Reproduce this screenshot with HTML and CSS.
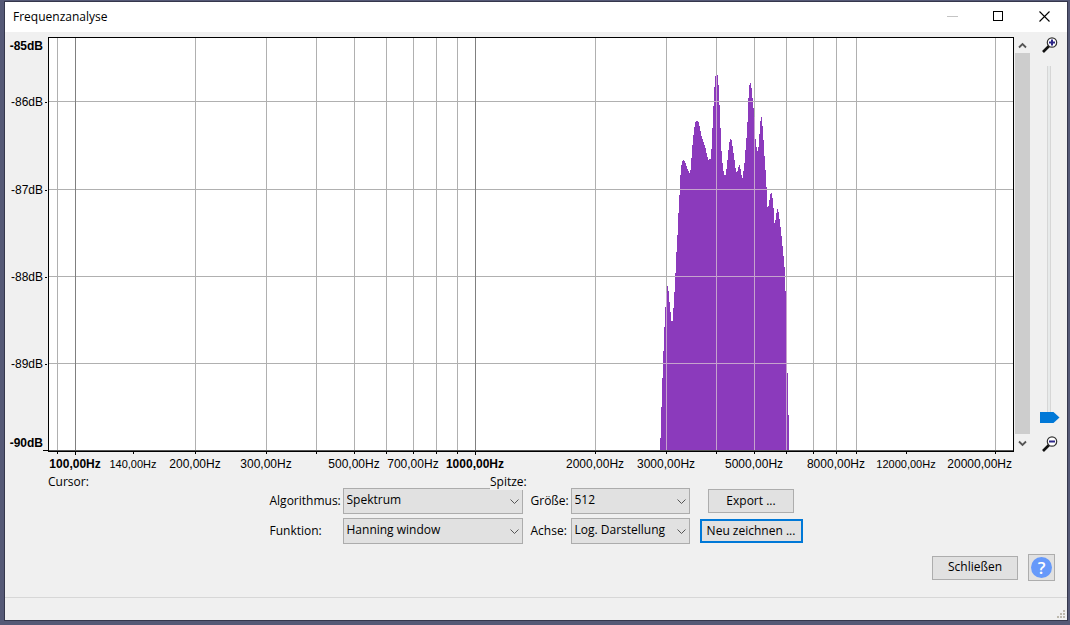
FILE: index.html
```html
<!DOCTYPE html>
<html lang="de">
<head>
<meta charset="utf-8">
<title>Frequenzanalyse</title>
<link rel="stylesheet" href="styles.css">
</head>
<body>
<main class="window">
  <header class="titlebar">
    <h1 class="title">Frequenzanalyse</h1>
    <button class="caption" aria-label="Minimieren" disabled><svg width="11" height="11"><path d="M0 5.5H11" stroke="#c4c4c4"/></svg></button>
    <button class="caption" aria-label="Maximieren"><svg width="11" height="11"><rect x=".5" y=".5" width="9" height="9" fill="none" stroke="#000"/></svg></button>
    <button class="caption" aria-label="Fenster schließen"><svg width="11" height="11"><path d="M.5 .5l10 10M10.5 .5l-10 10" stroke="#000" stroke-width="1.1"/></svg></button>
  </header>

  <section class="analysis">
    <div class="y-axis">
      <span class="y-label major" style="top:2.2%">-85dB</span>
      <span class="y-label tick" style="top:15.6%">-86dB</span>
      <span class="y-label tick" style="top:36.75%">-87dB</span>
      <span class="y-label tick" style="top:57.8%">-88dB</span>
      <span class="y-label tick" style="top:78.7%">-89dB</span>
      <span class="y-label major" style="top:97.8%">-90dB</span>
      <span class="y-end"></span>
    </div>
    <svg class="plot" viewBox="49 38 964 413" preserveAspectRatio="none" role="img" aria-label="Spektrum">
      <defs>
        <path id="spectrum" d="M660 450V438h1V407h1V378h1V351h1V327h1V307h1V293h1V286h1V291h1V302h1V312h1V321h1V321h1V308h1V292h1V273h1V252h1V235h1V213h1V195h1V175h1V165h1V161h1V160h1V161h1V163h1V166h1V169h1V171h1V173h1V170h1V158h1V145h1V135h1V127h1V122h1V121h1V121h1V122h1V126h1V131h1V136h1V139h1V142h1V145h1V148h1V153h1V157h1V160h1V159h2V149h1V128h1V106h1V87h1V76h1V75h1V75h1V85h1V105h1V128h1V151h1V163h1V171h1V175h1V175h1V169h1V160h1V150h1V142h1V139h1V140h1V146h1V153h1V160h1V168h1V172h1V171h1V167h1V165h1V169h1V175h1V178h1V171h1V163h1V150h1V138h1V122h1V98h1V85h1V83h1V88h1V98h1V108h1V117h1V139h1V147h1V151h1V147h1V134h1V121h1V117h1V126h1V140h1V156h1V170h1V187h1V207h1V206h1V200h1V194h1V193h1V198h1V208h1V223h1V220h1V213h1V209h1V212h1V219h1V227h1V236h1V246h1V256h1V267h1V291h2V373h1V415h1V450Z"/>
        <clipPath id="filled"><use href="#spectrum"/></clipPath>
        <path id="grid" d="M57.5 38V450M195.5 38V450M266.5 38V450M316.5 38V450M354.5 38V450M386.5 38V450M413.5 38V450M436.5 38V450M457.5 38V450M595.5 38V450M666.5 38V450M716.5 38V450M754.5 38V450M786.5 38V450M813.5 38V450M836.5 38V450M856.5 38V450M995.5 38V450M49 101.5H1013M49 189.5H1013M49 276.5H1013M49 363.5H1013"/>
      </defs>
      <use href="#grid" class="grid"/>
      <path class="decade" d="M75.5 38V450M475.5 38V450"/>
      <use href="#spectrum" class="spectrum"/>
      <use href="#grid" class="grid-over" clip-path="url(#filled)"/>
      <path class="base" d="M49 450.5H1013"/>
    </svg>
    <div class="scrollbar">
      <button class="arrow" aria-label="Nach oben"><svg width="9" height="7"><path d="M1 5.5L4.5 2L8 5.5" fill="none" stroke="#555" stroke-width="1.8"/></svg></button>
      <div class="scroll-thumb"></div>
      <button class="arrow" aria-label="Nach unten"><svg width="9" height="7"><path d="M1 1.5L4.5 5L8 1.5" fill="none" stroke="#555" stroke-width="1.8"/></svg></button>
    </div>
    <div class="zoom">
      <svg width="16" height="16"><path d="M1 15L7 9" stroke="#111" stroke-width="2.6"/><circle cx="10" cy="5.5" r="4.7" fill="#fff" stroke="#333" stroke-width="1.2"/><path d="M7 5.5h6M10 2.5v6" stroke="#2c2688" stroke-width="2"/></svg>
      <input class="zoom-range" type="range" min="0" max="100" value="0" aria-label="Zoom">
      <svg width="16" height="16"><path d="M1 15L7 9" stroke="#111" stroke-width="2.6"/><circle cx="10" cy="5.5" r="4.7" fill="#fff" stroke="#333" stroke-width="1.2"/><path d="M7 5.5h6" stroke="#2c2688" stroke-width="2"/></svg>
    </div>
    <div class="x-axis">
      <span class="mark" style="left:.95%"></span>
      <span class="mark long" style="left:2.8%"></span><span class="x-label major" style="left:2.8%">100,00Hz</span>
      <span class="mark" style="left:8.8%"></span><span class="x-label small" style="left:8.8%">140,00Hz</span>
      <span class="mark" style="left:15.22%"></span><span class="x-label" style="left:15.22%">200,00Hz</span>
      <span class="mark" style="left:22.57%"></span><span class="x-label" style="left:22.57%">300,00Hz</span>
      <span class="mark" style="left:27.74%"></span>
      <span class="mark" style="left:31.68%"></span><span class="x-label" style="left:31.68%">500,00Hz</span>
      <span class="mark" style="left:34.99%"></span>
      <span class="mark" style="left:37.78%"></span><span class="x-label" style="left:37.78%">700,00Hz</span>
      <span class="mark" style="left:40.17%"></span>
      <span class="mark" style="left:42.34%"></span>
      <span class="mark long" style="left:44.2%"></span><span class="x-label major" style="left:44.2%">1000,00Hz</span>
      <span class="mark" style="left:56.63%"></span><span class="x-label" style="left:56.63%">2000,00Hz</span>
      <span class="mark" style="left:63.98%"></span><span class="x-label" style="left:63.98%">3000,00Hz</span>
      <span class="mark" style="left:69.15%"></span>
      <span class="mark" style="left:73.09%"></span><span class="x-label" style="left:73.09%">5000,00Hz</span>
      <span class="mark" style="left:76.4%"></span>
      <span class="mark" style="left:79.19%"></span>
      <span class="mark" style="left:81.57%"></span><span class="x-label" style="left:81.57%">8000,00Hz</span>
      <span class="mark" style="left:83.64%"></span>
      <span class="mark" style="left:88.82%"></span><span class="x-label small" style="left:88.82%">12000,00Hz</span>
      <span class="mark" style="left:98.03%"></span><span class="x-label last">20000,00Hz</span>
    </div>
  </section>

  <div class="readout"><span class="cursor">Cursor:</span><span class="peak">Spitze:</span></div>

  <form class="options">
    <label for="algorithm">Algorithmus:</label>
    <div class="choice"><select id="algorithm"><option>Spektrum</option></select><svg width="9" height="6"><path d="M.5 .5l4 4 4-4" fill="none" stroke="#555"/></svg></div>
    <label class="second" for="size">Größe:</label>
    <div class="choice"><select id="size"><option>512</option></select><svg width="9" height="6"><path d="M.5 .5l4 4 4-4" fill="none" stroke="#555"/></svg></div>
    <button class="button" type="button">Export ...</button>
    <label for="function">Funktion:</label>
    <div class="choice"><select id="function"><option>Hanning window</option></select><svg width="9" height="6"><path d="M.5 .5l4 4 4-4" fill="none" stroke="#555"/></svg></div>
    <label class="second" for="axis">Achse:</label>
    <div class="choice"><select id="axis"><option>Log. Darstellung</option></select><svg width="9" height="6"><path d="M.5 .5l4 4 4-4" fill="none" stroke="#555"/></svg></div>
    <button class="button default" type="button">Neu zeichnen ...</button>
  </form>

  <div class="actions">
    <button class="button">Schließen</button>
    <button class="help" aria-label="Hilfe"><span class="help-mark">?</span></button>
  </div>
  <footer class="statusbar">
    <svg width="8" height="8" fill="#bdb9ae"><path d="M6 0h2v2h-2zM3 3h2v2h-2zM6 3h2v2h-2zM0 6h2v2h-2zM3 6h2v2h-2zM6 6h2v2h-2z"/></svg>
  </footer>
</main>
</body>
</html>
```
FILE: styles.css
```css
* { box-sizing: border-box; }

body {
  margin: 0;
  min-height: 100vh;
  padding: 2px 3px 5px 5px;
  display: flex;
  background: #555976;
  color: #000;
  font: 12px/16px "Open Sans", "Noto Sans", sans-serif;
}

button, select { font: inherit; color: inherit; margin: 0; }

.window {
  flex: 1;
  min-width: 0;
  display: flex;
  flex-direction: column;
  background: #f0f0f0;
  box-shadow: 0 0 0 1px #35374c;
}

.titlebar { display: flex; height: 30px; background: #fff; align-items: stretch; }
.title { flex: 1; margin: 0; padding-left: 8px; font-size: 12px; font-weight: 400; line-height: 30px; }
.caption {
  width: 46px;
  padding: 0 0 1px;
  border: 0;
  background: none;
  display: flex;
  align-items: center;
  justify-content: center;
}

.analysis {
  flex: 1;
  display: grid;
  grid-template-columns: 43px minmax(0, 1fr) 16px 37px;
  grid-template-rows: minmax(200px, 1fr) 23px;
  padding-top: 5px;
  font-family: "Liberation Sans", Arial, sans-serif;
}

.y-axis { position: relative; }
.y-label { position: absolute; right: 5px; line-height: 14px; transform: translateY(-50%); }
.y-label.tick::after {
  content: "";
  position: absolute;
  right: -4px;
  top: 7px;
  width: 2px;
  height: 1px;
  background: #000;
}
.y-end { position: absolute; right: 0; bottom: 1px; width: 5px; height: 1px; background: #000; }
.major { font-weight: 700; }

.plot {
  width: 100%;
  height: 100%;
  min-height: 0;
  border: 1px solid #000;
  background: #fff;
  shape-rendering: crispEdges;
}
.grid { stroke: #b0b0b0; }
.decade { stroke: #808080; }
.spectrum { fill: #8b3abc; }
.grid-over { stroke: #c6a3cd; }
.base { stroke: #555; }

.scrollbar { display: flex; flex-direction: column; padding: 1px 0 0 1px; }
.arrow {
  height: 15px;
  padding: 0;
  border: 0;
  background: none;
  display: flex;
  align-items: center;
  justify-content: center;
}
.arrow:last-child { height: 18px; }
.scroll-thumb { flex: 1; background: #cdcdcd; }

.zoom {
  display: flex;
  flex-direction: column;
  align-items: center;
  justify-content: space-between;
  padding-left: 2px;
}
.zoom svg { flex: none; }
.zoom-range {
  flex: 1;
  min-height: 0;
  width: 20px;
  margin: 13px 0;
  appearance: none;
  writing-mode: vertical-lr;
  direction: rtl;
  background: linear-gradient(#e7eaea, #e7eaea) 8px 0 / 2px 100% no-repeat,
    linear-gradient(#d6d6d6, #d6d6d6) 7px 0 / 4px 100% no-repeat;
}
.zoom-range::-webkit-slider-thumb {
  appearance: none;
  width: 20px;
  height: 11px;
  background: #0078d7;
  clip-path: polygon(0 0, 70% 0, 100% 50%, 70% 100%, 0 100%);
}

.x-axis { grid-column: 2; position: relative; }
.mark { position: absolute; top: 0; width: 1px; height: 2px; background: #000; }
.mark.long { height: 3px; }
.x-label { position: absolute; top: 5px; line-height: 14px; transform: translateX(-50%); }
.x-label.small { font-size: 11px; }
.x-label.last { left: auto; right: 2px; transform: none; }

.readout { display: grid; grid-template-columns: 442px 1fr; height: 13px; padding-left: 43px; line-height: 14px; }
.peak { position: relative; z-index: 1; justify-self: start; height: 15px; background: #f0f0f0; }

.options {
  display: grid;
  grid-template-columns: 69px 180px 40px 119px 109px;
  grid-auto-rows: 26px;
  gap: 4px;
  justify-content: center;
  align-items: center;
}
.options label { white-space: nowrap; }
.options .second { padding-left: 4px; }
.choice { position: relative; height: 26px; }
.choice select {
  appearance: none;
  width: 100%;
  height: 26px;
  padding: 0 20px 2px 3px;
  border: 1px solid #acacac;
  border-radius: 0;
  background: #e1e1e1;
}
.choice svg { position: absolute; right: 4px; top: 11px; pointer-events: none; }

.button {
  width: 86px;
  height: 24px;
  padding: 0 0 1px;
  border: 1px solid #adadad;
  background: #e1e1e1;
  white-space: nowrap;
}
.options .button { justify-self: center; margin-left: 6px; }
.options .button.default { width: 103px; border: 2px solid #0078d7; }

.actions { display: flex; justify-content: flex-end; align-items: center; gap: 10px; padding: 10px 12px 16px 0; }
.help {
  width: 27px;
  height: 27px;
  padding: 0;
  border: 1px solid #adadad;
  background: #e1e1e1;
  display: flex;
  align-items: center;
  justify-content: center;
}
.help-mark {
  width: 21px;
  height: 21px;
  border-radius: 50%;
  background: #6699fa;
  color: #fff;
  font-size: 17px;
  font-weight: 600;
  line-height: 21px;
}

.statusbar {
  height: 23px;
  border-top: 1px solid #d7d7d7;
  display: flex;
  justify-content: flex-end;
  align-items: flex-end;
  padding: 0 2px 2px 0;
}
```
